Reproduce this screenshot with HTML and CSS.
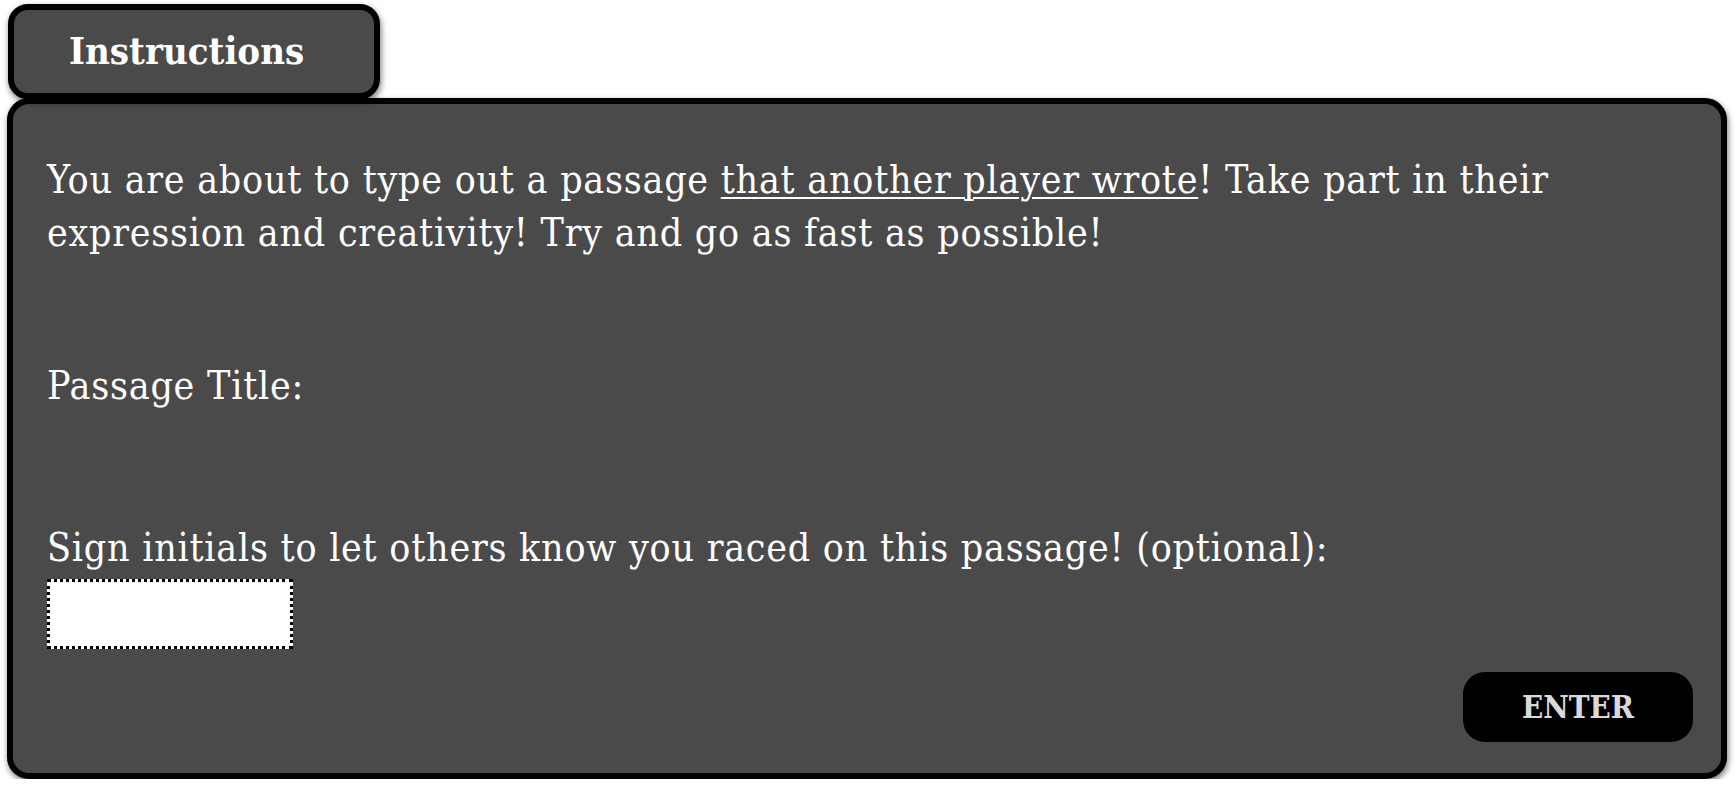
FILE: index.html
```html
<!DOCTYPE html>
<html lang="en">
<head>
<meta charset="utf-8">
<title>Instructions</title>
<link rel="stylesheet" href="styles.css">
</head>
<body>
<div class="page">
  <div class="tab">Instructions</div>
  <div class="panel">
    <p class="intro">You are about to type out a passage <span class="link">that another player wrote</span>! Take part in their expression and creativity! Try and go as fast as possible!</p>
    <p class="title-label">Passage Title:</p>
    <p class="sign-label">Sign initials to let others know you raced on this passage! (optional):</p>
    <input class="initials" type="text" aria-label="Initials">
    <button class="enter" type="button">ENTER</button>
  </div>
</div>
</body>
</html>
```
FILE: styles.css
```css
html, body {
  margin: 0;
  padding: 0;
  background: #ffffff;
}

body {
  font-family: "DejaVu Serif Condensed", "DejaVu Serif", serif;
  font-stretch: semi-condensed;
  color: #ffffff;
}

.page {
  padding: 4px 9px 0 7px;
  display: flex;
  flex-direction: column;
  align-items: flex-start;
}

.tab {
  margin-left: 1px;
  width: 372px;
  height: 95px;
  box-sizing: border-box;
  background: #4a4a4a;
  border: 6px solid #000;
  border-radius: 20px;
  box-shadow: 1px 3px 6px rgba(0, 0, 0, 0.55);
  font-weight: bold;
  font-size: 38px;
  line-height: 82px;
  padding-left: 55px;
  position: relative;
  z-index: 1;
}

.panel {
  margin-top: -1px;
  align-self: stretch;
  height: 681px;
  box-sizing: border-box;
  background: #4a4a4a;
  border: 6px solid #000;
  border-radius: 22px;
  box-shadow: 1px 3px 6px rgba(0, 0, 0, 0.55);
  padding: 49px 28px 30px 34px;
  display: flex;
  flex-direction: column;
  align-items: flex-start;
  font-size: 39px;
  letter-spacing: 0.75px;
  line-height: 53px;
}

.panel p {
  margin: 0;
}

.intro {
  align-self: stretch;
}

.link {
  text-decoration: underline;
  text-decoration-thickness: 2px;
  text-underline-offset: 4px;
}

.title-label {
  margin-top: 100px !important;
}

.sign-label {
  margin-top: 109px !important;
}

.initials {
  margin-top: 5px;
  width: 246px;
  height: 70px;
  box-sizing: border-box;
  background: #ffffff;
  border: 3px dotted #000;
  border-radius: 0;
  padding: 0 8px;
  font: inherit;
  font-size: 30px;
  outline: none;
}

.enter {
  margin-top: 23px;
  align-self: flex-end;
  width: 230px;
  height: 70px;
  background: #000;
  color: #dadada;
  border: none;
  border-radius: 22px;
  font-family: inherit;
  font-stretch: semi-condensed;
  font-weight: bold;
  font-size: 31px;
  letter-spacing: 0;
  padding: 0;
  cursor: pointer;
}
```
